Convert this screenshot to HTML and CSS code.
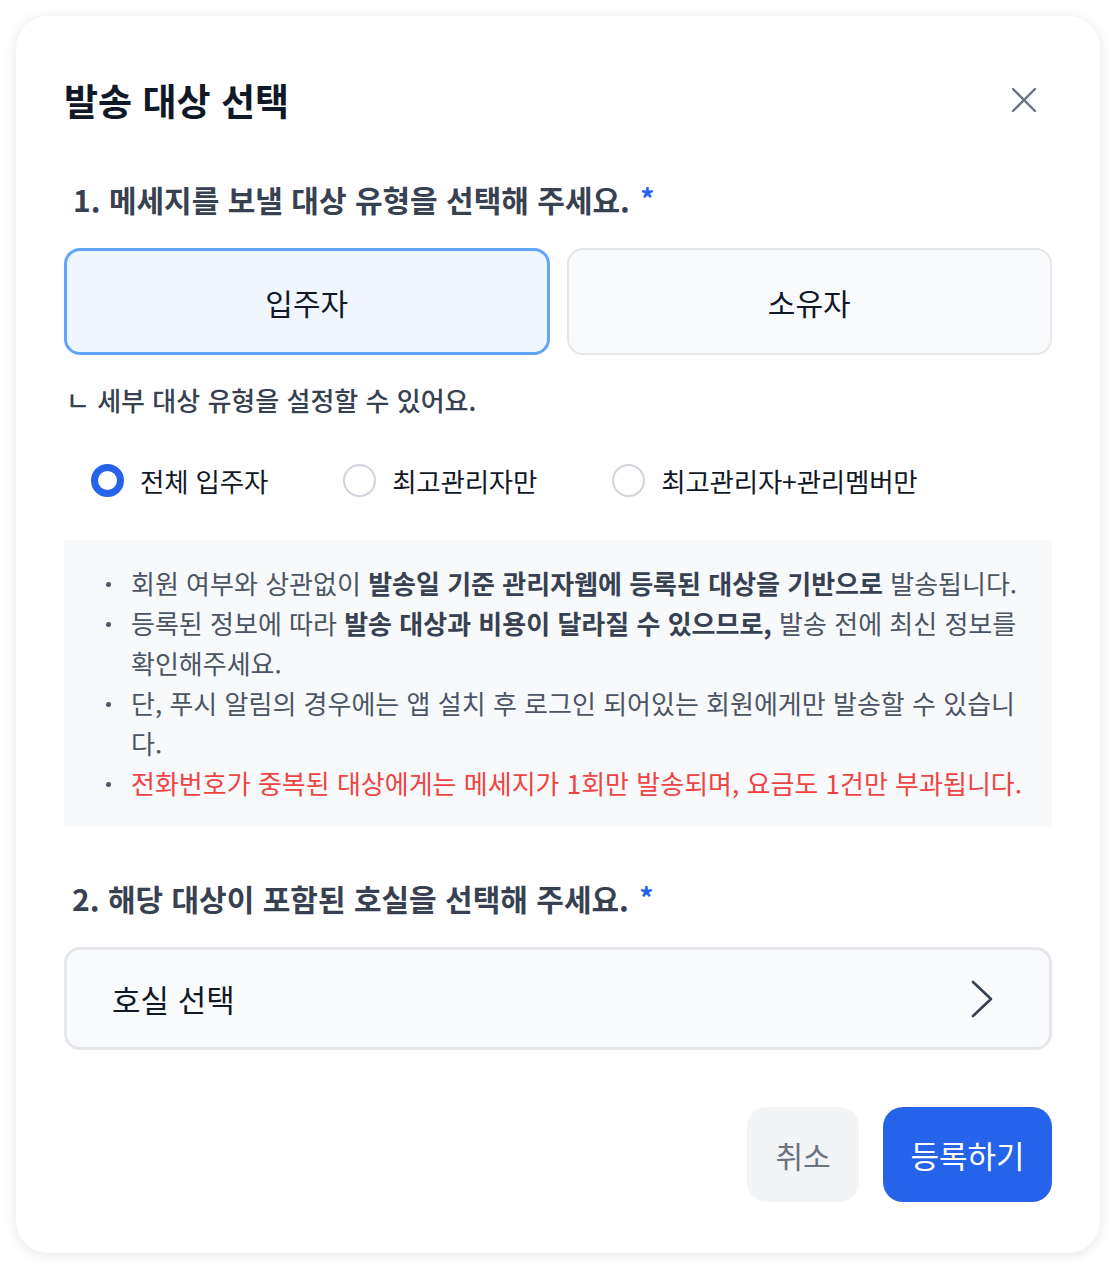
FILE: index.html
```html
<!DOCTYPE html>
<html lang="ko">
  <head>
    <meta charset="UTF-8">
    <title>발송 대상 선택</title>
    <link rel="stylesheet" href="styles.css">
  </head>
  <body>
    <div class="modal">
      <div class="modal-head">
        <h1 class="modal-title">발송 대상 선택</h1>
        <button class="close-btn" type="button" aria-label="닫기">
          <svg width="28" height="28" viewBox="0 0 28 28" fill="none">
            <path d="M3 3L25 25M25 3L3 25" stroke="#6b7280" stroke-width="2.4" stroke-linecap="round"/>
          </svg>
        </button>
      </div>

      <p class="step-label">1. 메세지를 보낼 대상 유형을 선택해 주세요. <span class="req">*</span></p>

      <div class="type-grid">
        <button class="type-btn active" type="button">입주자</button>
        <button class="type-btn" type="button">소유자</button>
      </div>

      <p class="sub-note">ㄴ 세부 대상 유형을 설정할 수 있어요.</p>

      <div class="radio-row">
        <label class="radio-item"><span class="radio checked"></span>전체 입주자</label>
        <label class="radio-item"><span class="radio"></span>최고관리자만</label>
        <label class="radio-item"><span class="radio"></span>최고관리자+관리멤버만</label>
      </div>

      <div class="notice">
        <ul>
          <li>회원 여부와 상관없이 <b>발송일 기준 관리자웹에 등록된 대상을 기반으로</b> 발송됩니다.</li>
          <li>등록된 정보에 따라 <b>발송 대상과 비용이 달라질 수 있으므로,</b> 발송 전에 최신 정보를 확인해주세요.</li>
          <li>단, 푸시 알림의 경우에는 앱 설치 후 로그인 되어있는 회원에게만 발송할 수 있습니다.</li>
          <li class="warn">전화번호가 중복된 대상에게는 메세지가 1회만 발송되며, 요금도 1건만 부과됩니다.</li>
        </ul>
      </div>

      <p class="step-label step-two">2. 해당 대상이 포함된 호실을 선택해 주세요. <span class="req">*</span></p>

      <button class="room-select" type="button">
        <span>호실 선택</span>
        <svg width="26" height="38" viewBox="0 0 26 38" fill="none">
          <path d="M4 2L22 19L4 36" stroke="#374151" stroke-width="2.6" stroke-linecap="round" stroke-linejoin="round"/>
        </svg>
      </button>

      <div class="actions">
        <button class="btn btn-cancel" type="button">취소</button>
        <button class="btn btn-submit" type="button">등록하기</button>
      </div>
    </div>
  </body>
</html>
```

FILE: styles.css
```css
* { box-sizing: border-box; }

body {
  margin: 0;
  padding: 16px;
  background-color: #ffffff;
  font-family: "Noto Sans CJK KR", "Noto Sans", sans-serif;
  color: #111827;
}

button { font-family: inherit; cursor: pointer; }

.modal {
  background-color: #fff;
  border-radius: 32px;
  box-shadow: 0 2px 14px rgba(17, 24, 39, 0.10);
  padding: 48px 48px 51px;
}

.modal-head {
  height: 72px;
  display: flex;
  align-items: center;
  justify-content: space-between;
}
.modal-title {
  margin: 0;
  font-size: 37px;
  font-weight: 700;
  color: #111827;
}
.close-btn {
  border: 0;
  background: none;
  padding: 0;
  margin-right: 14px;
  display: flex;
}

.step-label {
  margin: 42px 0 0;
  padding-left: 9px;
  height: 40px;
  line-height: 40px;
  font-size: 30px;
  font-weight: 700;
  color: #374151;
}
.step-label.step-two { margin-top: 50px; padding-left: 8px; }
.req {
  color: #2563eb;
  font-size: 28px;
  vertical-align: 2px;
  margin-left: 2px;
}

.type-grid {
  margin-top: 30px;
  display: grid;
  grid-template-columns: 1fr 1fr;
  gap: 17px;
}
.type-btn {
  height: 107px;
  border: 2px solid #e5e7eb;
  border-radius: 16px;
  background-color: #f9fafb;
  font-size: 30px;
  color: #111827;
}
.type-btn.active {
  border: 3px solid #60a5fa;
  background-color: #eff6ff;
}

.sub-note {
  margin: 27px 0 0;
  padding-left: 2px;
  line-height: 36px;
  font-size: 26px;
  font-weight: 500;
  color: #374151;
}

.radio-row {
  margin-top: 42px;
  padding-left: 27px;
  height: 40px;
  display: flex;
  align-items: center;
  gap: 75px;
}
.radio-item {
  display: flex;
  align-items: center;
  gap: 16px;
  font-size: 26.5px;
  letter-spacing: -0.2px;
  color: #111827;
}
.radio {
  width: 33px;
  height: 33px;
  border-radius: 50%;
  border: 2px solid #d1d5db;
  background: #fff;
}
.radio.checked { border: 7px solid #2563eb; }

.notice {
  margin-top: 40px;
  background-color: #f8f9fb;
  padding: 23px 20px 24px 24px;
}
.notice ul {
  margin: 0;
  padding-left: 43px;
  list-style: none;
  font-size: 26px;
  line-height: 40px;
  color: #4b5563;
}
.notice li { position: relative; }
.notice li::before {
  content: "";
  position: absolute;
  left: -25px;
  top: 19px;
  width: 5px;
  height: 5px;
  border-radius: 50%;
  background-color: #4b5563;
}
.notice b { font-weight: 700; color: #374151; }
.notice .warn { color: #ef4444; }

.room-select {
  margin-top: 30px;
  width: 100%;
  height: 103px;
  display: flex;
  align-items: center;
  justify-content: space-between;
  padding: 0 54px 0 45px;
  border: 3px solid #e5e7eb;
  border-radius: 16px;
  background-color: #f9fafb;
  font-size: 31px;
  color: #111827;
  text-align: left;
}

.actions {
  margin-top: 57px;
  display: flex;
  justify-content: flex-end;
  gap: 24px;
}
.btn {
  height: 95px;
  border: 0;
  border-radius: 20px;
  font-size: 30px;
}
.btn-cancel {
  width: 112px;
  background-color: #f3f4f6;
  color: #6b7280;
}
.btn-submit {
  width: 169px;
  font-size: 31px;
  background-color: #2563eb;
  color: #fff;
}
```
